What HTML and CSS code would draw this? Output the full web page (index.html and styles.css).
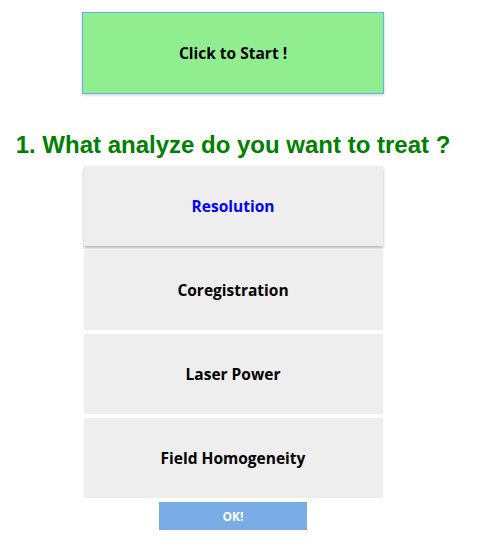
FILE: index.html
```html
<!DOCTYPE html>
<html>
<head>
<meta charset="utf-8">
<link rel="stylesheet" href="styles.css">
</head>
<body>
<main class="page">
  <button class="start">Click to Start !</button>
  <h1 class="title">1. What analyze do you want to treat ?</h1>
  <div class="options">
    <div class="option selected">Resolution</div>
    <div class="option">Coregistration</div>
    <div class="option">Laser Power</div>
    <div class="option">Field Homogeneity</div>
  </div>
  <button class="ok">OK!</button>
</main>
</body>
</html>
```
FILE: styles.css
```css
html, body {
  margin: 0;
  padding: 0;
  background: #ffffff;
}
.page {
  width: 466px;
  display: flex;
  flex-direction: column;
  align-items: center;
  padding-top: 12px;
  font-family: "Open Sans", sans-serif;
}
.start {
  box-sizing: border-box;
  width: 302px;
  height: 82px;
  background: #90ee90;
  border: 1px solid #69aef5;
  box-shadow: 0 1px 3px rgba(0,0,0,0.2);
  font-family: "Open Sans", sans-serif;
  font-weight: 700;
  font-size: 15.5px;
  color: #000;
  margin: 0;
  padding: 0;
}
.title {
  margin: 36px 0 7px;
  font-family: "Liberation Sans", Arial, sans-serif;
  font-weight: 700;
  font-size: 24px;
  color: #008000;
  line-height: 29px;
}
.options {
  display: flex;
  flex-direction: column;
  gap: 4px;
  width: 299px;
}
.option {
  height: 80px;
  background: #eeeeee;
  display: flex;
  align-items: center;
  justify-content: center;
  font-weight: 700;
  font-size: 15.5px;
  color: #000;
}
.option.selected {
  color: #0000ff;
  box-shadow: 0 2px 3px rgba(0,0,0,0.3);
}
.ok {
  width: 148px;
  height: 28px;
  margin-top: 4px;
  background: #7aade5;
  border: none;
  color: #fff;
  font-family: "Open Sans", sans-serif;
  font-weight: 700;
  font-size: 12px;
  padding: 0;
}
```
